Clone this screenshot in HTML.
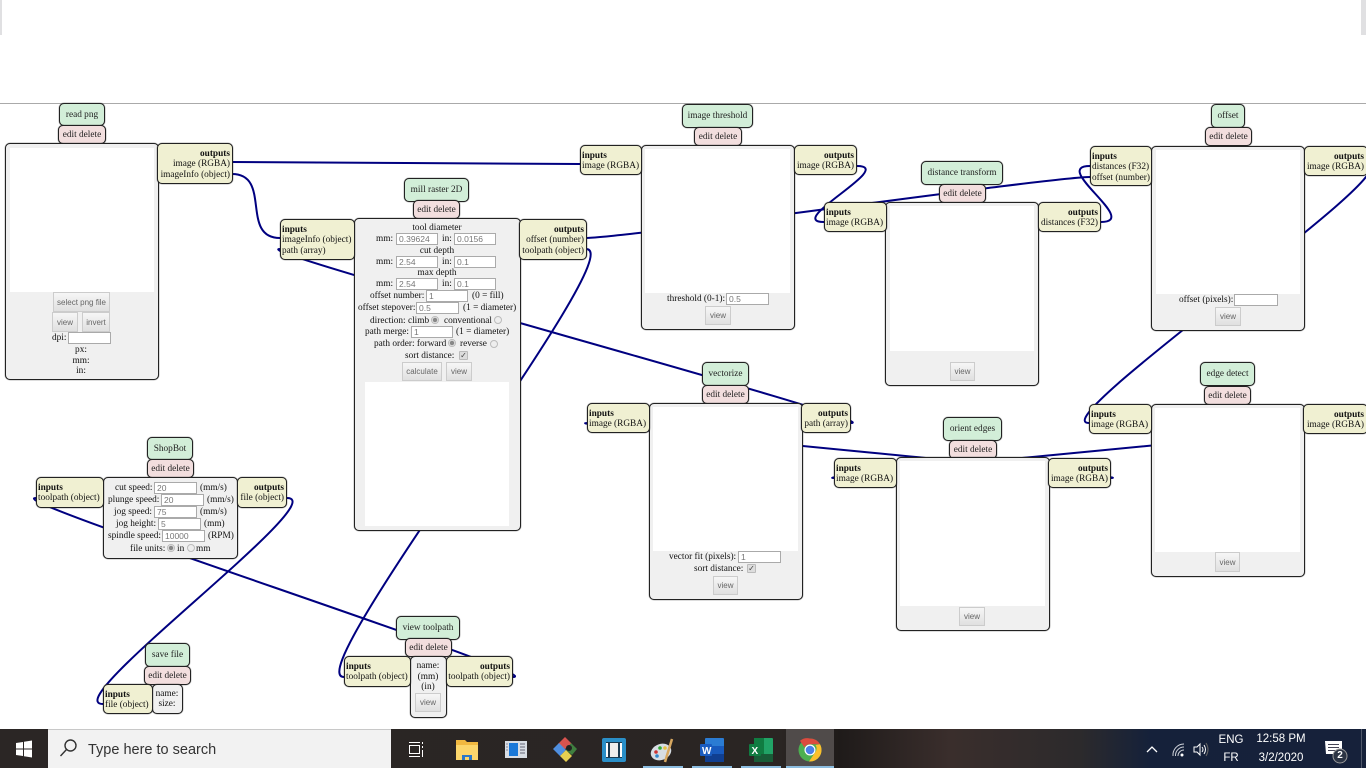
<!DOCTYPE html>
<html><head><meta charset="utf-8"><title>mods</title>
<style>
html,body{margin:0;padding:0;width:1366px;height:768px;overflow:hidden;background:#fff}
*{box-sizing:border-box}
body{position:relative;font-family:"Liberation Serif",serif;font-size:9.3px;color:#111}
.a,.g,.p,.y,.m,.w,.t,.c,i,button{position:absolute}
.g{background:#d2eed8;border:1px solid #222;box-shadow:0 0 1px #222;border-radius:5px;display:flex;align-items:center;justify-content:center;color:#222;white-space:nowrap}
.p{background:#f2dede;border:1px solid #222;box-shadow:0 0 1px #222;border-radius:5px;display:flex;align-items:center;justify-content:center;color:#222;white-space:nowrap}
.y{background:#f0f0d2;border:1px solid #222;box-shadow:0 0 1px #222;border-radius:5px;line-height:10.5px;padding:4.5px 2px 0 1px}
.y.r{text-align:right}
.y b{display:block}
.y span{display:block;white-space:nowrap}
.m{background:#f0f0f0;border:1px solid #222;box-shadow:0 0 1px #222;border-radius:5px}
.w{background:#fff}
.t,.c{white-space:nowrap;line-height:11px;margin-top:1px}
.c{transform:translateX(-50%)}
input{position:absolute;border:1px solid #aaa;background:#fff;font:8.5px "Liberation Sans",sans-serif;color:#777;padding:0 0 0 2px;height:12px;margin:0;outline:0}
button{border:1px solid #ccc;background:linear-gradient(#f6f6f6,#e0e0e0);font:8px "Liberation Sans",sans-serif;color:#666;padding:0;margin:0}
i.ra{width:8px;height:8px;border-radius:50%;border:1px solid #bbb;background:#eee}
i.on{background:radial-gradient(circle,#888 0 2px,#eee 2.5px)}
i.ck{width:9px;height:9px;border:1px solid #bbb;background:#ddd;border-radius:1px;font:normal 8px/8px "DejaVu Sans",sans-serif;color:#444;text-align:center}
#tb{position:absolute;left:0;top:729px;width:1366px;height:39px;background:linear-gradient(90deg,#2b2625 0,#2a2523 780px,#1f1b1a 840px,#3a2e2c 950px,#2c2a2c 1080px,#15213a 1150px,#16213a 1366px)}
.u{position:absolute;top:766px;height:2px;background:#8cbde0}
.tray{position:absolute;color:#fff;font:11.5px/14px "Liberation Sans",sans-serif;text-align:center;white-space:nowrap;transform:translateX(-50%)}
</style></head><body>

<div class="a" style="left:0;top:0;width:2px;height:35px;background:#e0e0e2"></div>
<div class="a" style="left:1361px;top:0;width:5px;height:35px;background:#e0e0e2"></div>
<div class="a" style="left:0;top:103px;width:1366px;height:1px;background:#aaa"></div>

<svg class="a" style="left:0;top:0" width="1366" height="768" fill="none" stroke="#000080" stroke-width="2">
<path d="M232,162 C272,162 540,164 580,164"/>
<path d="M232,174 C272,174 240,238 280,238"/>
<path d="M586,238 C626,238 1050,177 1090,177"/>
<path d="M586,249 C634,249 296,677 344,677"/>
<path d="M851,423 C891,423 240,249 280,249"/>
<path d="M857,166 C897,166 784,222 824,222"/>
<path d="M1101,222 C1141,222 1050,166 1090,166"/>
<path d="M1366,166 C1414,166 1041,423 1089,423"/>
<path d="M1111,478 C1151,478 547,423 587,423"/>
<path d="M1366,423 C1406,423 794,478 834,478"/>
<path d="M513,677 C553,677 -4,498 36,498"/>
<path d="M287,498 C335,498 55,704 103,704"/>
</svg>

<!-- read png -->
<div class="g" style="left:59px;top:103px;width:46px;height:23px">read png</div>
<div class="p" style="left:58px;top:125px;width:48px;height:19px">edit delete</div>
<div class="m" style="left:5px;top:143px;width:154px;height:237px"></div>
<div class="w" style="left:10px;top:148px;width:144px;height:144px"></div>
<button style="left:53px;top:292px;width:57px;height:20px">select png file</button>
<button style="left:52px;top:312px;width:26px;height:20px">view</button>
<button style="left:82px;top:312px;width:28px;height:20px">invert</button>
<span class="t" style="left:52px;top:332px">dpi:</span>
<input style="left:68px;top:332px;width:43px">
<span class="c" style="left:81px;top:344px">px:</span>
<span class="c" style="left:81px;top:355px">mm:</span>
<span class="c" style="left:81px;top:365px">in:</span>
<div class="y r" style="left:157px;top:143px;width:76px;height:41px"><b>outputs</b><span>image (RGBA)</span><span>imageInfo (object)</span></div>

<!-- mill raster 2D -->
<div class="g" style="left:404px;top:178px;width:65px;height:24px">mill raster 2D</div>
<div class="p" style="left:413px;top:200px;width:47px;height:19px">edit delete</div>
<div class="m" style="left:354px;top:218px;width:167px;height:313px"></div>
<div class="y" style="left:280px;top:219px;width:75px;height:41px"><b>inputs</b><span>imageInfo (object)</span><span>path (array)</span></div>
<div class="y r" style="left:519px;top:219px;width:68px;height:41px"><b>outputs</b><span>offset (number)</span><span>toolpath (object)</span></div>
<span class="c" style="left:437px;top:222px">tool diameter</span>
<span class="t" style="left:376px;top:233px">mm:</span><input style="left:396px;top:233px;width:42px" value="0.39624"><span class="t" style="left:442px;top:233px">in:</span><input style="left:454px;top:233px;width:42px" value="0.0156">
<span class="c" style="left:437px;top:245px">cut depth</span>
<span class="t" style="left:376px;top:256px">mm:</span><input style="left:396px;top:256px;width:42px" value="2.54"><span class="t" style="left:442px;top:256px">in:</span><input style="left:454px;top:256px;width:42px" value="0.1">
<span class="c" style="left:437px;top:267px">max depth</span>
<span class="t" style="left:376px;top:278px">mm:</span><input style="left:396px;top:278px;width:42px" value="2.54"><span class="t" style="left:442px;top:278px">in:</span><input style="left:454px;top:278px;width:42px" value="0.1">
<span class="t" style="left:370px;top:290px">offset number:</span><input style="left:426px;top:290px;width:42px" value="1"><span class="t" style="left:472px;top:290px">(0 = fill)</span>
<span class="t" style="left:358px;top:302px">offset stepover:</span><input style="left:416px;top:302px;width:43px" value="0.5"><span class="t" style="left:463px;top:302px">(1 = diameter)</span>
<span class="t" style="left:370px;top:315px">direction: climb</span><i class="ra on" style="left:431px;top:316px"></i><span class="t" style="left:444px;top:315px">conventional</span><i class="ra" style="left:494px;top:316px"></i>
<span class="t" style="left:365px;top:326px">path merge:</span><input style="left:411px;top:326px;width:42px" value="1"><span class="t" style="left:456px;top:326px">(1 = diameter)</span>
<span class="t" style="left:374px;top:338px">path order: forward</span><i class="ra on" style="left:448px;top:339px"></i><span class="t" style="left:460px;top:338px">reverse</span><i class="ra" style="left:490px;top:340px"></i>
<span class="t" style="left:405px;top:350px">sort distance:</span><i class="ck" style="left:459px;top:351px">✓</i>
<button style="left:402px;top:362px;width:40px;height:19px">calculate</button>
<button style="left:446px;top:362px;width:26px;height:19px">view</button>
<div class="w" style="left:365px;top:382px;width:144px;height:144px"></div>

<!-- image threshold -->
<div class="g" style="left:682px;top:104px;width:71px;height:24px">image threshold</div>
<div class="p" style="left:694px;top:127px;width:48px;height:19px">edit delete</div>
<div class="m" style="left:641px;top:145px;width:154px;height:185px"></div>
<div class="w" style="left:645px;top:149px;width:145px;height:144px"></div>
<div class="y" style="left:580px;top:145px;width:62px;height:30px"><b>inputs</b><span>image (RGBA)</span></div>
<div class="y r" style="left:794px;top:145px;width:63px;height:30px"><b>outputs</b><span>image (RGBA)</span></div>
<span class="t" style="left:667px;top:293px">threshold (0-1):</span><input style="left:726px;top:293px;width:43px" value="0.5">
<button style="left:705px;top:306px;width:26px;height:19px">view</button>

<!-- distance transform -->
<div class="g" style="left:921px;top:161px;width:82px;height:24px">distance transform</div>
<div class="p" style="left:939px;top:184px;width:47px;height:19px">edit delete</div>
<div class="m" style="left:885px;top:202px;width:154px;height:184px"></div>
<div class="w" style="left:890px;top:206px;width:144px;height:145px"></div>
<div class="y" style="left:824px;top:202px;width:63px;height:30px"><b>inputs</b><span>image (RGBA)</span></div>
<div class="y r" style="left:1038px;top:202px;width:63px;height:30px"><b>outputs</b><span>distances (F32)</span></div>
<button style="left:950px;top:362px;width:25px;height:19px">view</button>

<!-- offset -->
<div class="g" style="left:1211px;top:104px;width:34px;height:24px">offset</div>
<div class="p" style="left:1205px;top:127px;width:47px;height:19px">edit delete</div>
<div class="m" style="left:1151px;top:146px;width:154px;height:185px"></div>
<div class="w" style="left:1156px;top:150px;width:144px;height:144px"></div>
<div class="y" style="left:1090px;top:146px;width:62px;height:40px"><b>inputs</b><span>distances (F32)</span><span>offset (number)</span></div>
<div class="y r" style="left:1304px;top:146px;width:64px;height:30px;padding-right:3px"><b>outputs</b><span>image (RGBA)</span></div>
<span class="t" style="left:1179px;top:294px">offset (pixels):</span><input style="left:1234px;top:294px;width:44px">
<button style="left:1215px;top:307px;width:26px;height:19px">view</button>

<!-- vectorize -->
<div class="g" style="left:702px;top:362px;width:47px;height:24px">vectorize</div>
<div class="p" style="left:702px;top:385px;width:47px;height:19px">edit delete</div>
<div class="m" style="left:649px;top:403px;width:154px;height:197px"></div>
<div class="w" style="left:653px;top:407px;width:145px;height:144px"></div>
<div class="y" style="left:587px;top:403px;width:63px;height:30px"><b>inputs</b><span>image (RGBA)</span></div>
<div class="y r" style="left:801px;top:403px;width:50px;height:30px"><b>outputs</b><span>path (array)</span></div>
<span class="t" style="left:669px;top:551px">vector fit (pixels):</span><input style="left:738px;top:551px;width:43px" value="1">
<span class="t" style="left:694px;top:563px">sort distance:</span><i class="ck" style="left:747px;top:564px">✓</i>
<button style="left:713px;top:576px;width:25px;height:19px">view</button>

<!-- orient edges -->
<div class="g" style="left:943px;top:417px;width:59px;height:24px">orient edges</div>
<div class="p" style="left:949px;top:440px;width:48px;height:19px">edit delete</div>
<div class="m" style="left:896px;top:457px;width:154px;height:174px"></div>
<div class="w" style="left:900px;top:461px;width:145px;height:145px"></div>
<div class="y" style="left:834px;top:458px;width:63px;height:30px"><b>inputs</b><span>image (RGBA)</span></div>
<div class="y r" style="left:1048px;top:458px;width:63px;height:30px"><b>outputs</b><span>image (RGBA)</span></div>
<button style="left:959px;top:607px;width:26px;height:19px">view</button>

<!-- edge detect -->
<div class="g" style="left:1200px;top:362px;width:55px;height:24px">edge detect</div>
<div class="p" style="left:1204px;top:386px;width:47px;height:19px">edit delete</div>
<div class="m" style="left:1151px;top:404px;width:154px;height:173px"></div>
<div class="w" style="left:1155px;top:408px;width:145px;height:144px"></div>
<div class="y" style="left:1089px;top:404px;width:63px;height:30px"><b>inputs</b><span>image (RGBA)</span></div>
<div class="y r" style="left:1303px;top:404px;width:65px;height:30px;padding-right:3px"><b>outputs</b><span>image (RGBA)</span></div>
<button style="left:1215px;top:552px;width:25px;height:20px">view</button>

<!-- ShopBot -->
<div class="g" style="left:147px;top:437px;width:46px;height:23px">ShopBot</div>
<div class="p" style="left:147px;top:459px;width:47px;height:19px">edit delete</div>
<div class="m" style="left:103px;top:477px;width:135px;height:82px"></div>
<div class="y" style="left:36px;top:477px;width:68px;height:31px"><b>inputs</b><span>toolpath (object)</span></div>
<div class="y r" style="left:237px;top:477px;width:50px;height:31px"><b>outputs</b><span>file (object)</span></div>
<span class="t" style="left:115px;top:482px">cut speed:</span><input style="left:154px;top:482px;width:43px" value="20"><span class="t" style="left:200px;top:482px">(mm/s)</span>
<span class="t" style="left:108px;top:494px">plunge speed:</span><input style="left:161px;top:494px;width:43px" value="20"><span class="t" style="left:207px;top:494px">(mm/s)</span>
<span class="t" style="left:114px;top:506px">jog speed:</span><input style="left:154px;top:506px;width:43px" value="75"><span class="t" style="left:200px;top:506px">(mm/s)</span>
<span class="t" style="left:116px;top:518px">jog height:</span><input style="left:158px;top:518px;width:43px" value="5"><span class="t" style="left:204px;top:518px">(mm)</span>
<span class="t" style="left:108px;top:530px">spindle speed:</span><input style="left:162px;top:530px;width:43px" value="10000"><span class="t" style="left:208px;top:530px">(RPM)</span>
<span class="t" style="left:130px;top:543px">file units:</span><i class="ra on" style="left:167px;top:544px"></i><span class="t" style="left:177px;top:543px">in</span><i class="ra" style="left:187px;top:544px"></i><span class="t" style="left:196px;top:543px">mm</span>

<!-- save file -->
<div class="g" style="left:145px;top:643px;width:45px;height:24px">save file</div>
<div class="p" style="left:144px;top:666px;width:47px;height:19px">edit delete</div>
<div class="m" style="left:152px;top:684px;width:31px;height:30px"></div>
<div class="y" style="left:103px;top:684px;width:50px;height:30px"><b>inputs</b><span>file (object)</span></div>
<span class="c" style="left:167px;top:688px">name:</span>
<span class="c" style="left:167px;top:698px">size:</span>

<!-- view toolpath -->
<div class="g" style="left:396px;top:616px;width:64px;height:24px">view toolpath</div>
<div class="p" style="left:405px;top:638px;width:47px;height:19px">edit delete</div>
<div class="m" style="left:410px;top:656px;width:37px;height:62px"></div>
<div class="y" style="left:344px;top:656px;width:67px;height:31px"><b>inputs</b><span>toolpath (object)</span></div>
<div class="y r" style="left:446px;top:656px;width:67px;height:31px"><b>outputs</b><span>toolpath (object)</span></div>
<span class="c" style="left:428px;top:660px">name:</span>
<span class="c" style="left:428px;top:671px">(mm)</span>
<span class="c" style="left:428px;top:681px">(in)</span>
<button style="left:415px;top:693px;width:26px;height:19px">view</button>

<!-- taskbar -->
<div id="tb"></div>
<div class="a" style="left:48px;top:729px;width:343px;height:39px;background:#f2f2f2;border-top:1px solid #c8c8c8"></div>
<div class="a" style="left:786px;top:729px;width:48px;height:39px;background:#504b4a"></div>
<div class="u" style="left:643px;width:40px"></div>
<div class="u" style="left:692px;width:40px"></div>
<div class="u" style="left:741px;width:40px"></div>
<div class="u" style="left:786px;width:48px"></div>

<svg class="a" style="left:0;top:729px" width="1366" height="39">
<!-- windows -->
<g fill="#fff"><path d="M16,14 L23,13 V19.5 H16Z"/><path d="M24,12.8 L32,11.5 V19.5 H24Z"/><path d="M16,20.5 H23 V27 L16,26Z"/><path d="M24,20.5 H32 V28.5 L24,27.2Z"/></g>
<!-- search -->
<g fill="none" stroke="#333" stroke-width="1.4"><circle cx="70.5" cy="16.5" r="5.5"/><path d="M66.5,20.5 L60.5,27"/></g>
<!-- task view -->
<g fill="none" stroke="#fff" stroke-width="1"><rect x="409.5" y="16.5" width="10" height="8"/><path d="M409,13.5H420M409,27.5H420M422.5,13v2M422.5,17v2M422.5,21v7"/></g>
<!-- folder -->
<path d="M456,11 H465 L467,13 H478 V31 H456Z" fill="#f0b840"/>
<path d="M456,16 H478 V31 H456Z" fill="#fbd66b"/>
<path d="M462,31 V26 H472 V31 H469 V28 H465 V31Z" fill="#2a78c8"/>
<!-- news/window app -->
<rect x="505" y="12" width="22" height="17" fill="#d8dde4"/><rect x="509" y="14" width="9" height="13" fill="#1a78d8"/><path d="M520,15h5M520,18h5M520,21h5M520,24h5" stroke="#667" stroke-width="1"/><path d="M506,15h2M506,18h2M506,21h2" stroke="#889" stroke-width="1"/>
<!-- diamond -->
<path d="M565,8 L572,15 L565,20 L558,15Z" fill="#d9534f"/>
<path d="M553,20 L559,14 L566,21 L560,27Z" fill="#4f8fe0"/>
<path d="M566,21 L571,14 L577,20 L572,26Z" fill="#3f7f3f"/>
<path d="M560,27 L566,21 L572,27 L566,33Z" fill="#e8d050"/>
<circle cx="569" cy="19" r="3" fill="#222"/>
<!-- blue square -->
<rect x="602" y="9" width="24" height="24" rx="2" fill="#2a8fc8"/><rect x="606" y="13" width="16" height="16" fill="#1a3a50"/><rect x="610" y="14" width="8" height="14" fill="#eee"/><path d="M607,14v14M621,14v14" stroke="#fff" stroke-width="2"/>
<!-- palette -->
<ellipse cx="661" cy="23" rx="10.5" ry="8" fill="#d7dde3" transform="rotate(-20 661 23)"/><circle cx="656" cy="23" r="1.8" fill="#c33"/><circle cx="660" cy="19" r="1.8" fill="#3a3"/><circle cx="665" cy="19" r="1.8" fill="#e8c040"/><circle cx="657" cy="27" r="1.8" fill="#38c"/>
<path d="M672,10 L665,33" stroke="#d8a860" stroke-width="2.5"/>
<!-- word -->
<rect x="705" y="9" width="19" height="24" rx="1" fill="#2b7cd3"/><rect x="705" y="17" width="19" height="8" fill="#185abd"/><rect x="705" y="25" width="19" height="8" fill="#103f91"/><rect x="700" y="15" width="12" height="12" rx="1" fill="#1a5cc0"/>
<text x="702" y="25" font-family="Liberation Sans" font-weight="bold" font-size="10" fill="#fff">W</text>
<!-- excel -->
<rect x="754" y="9" width="19" height="24" rx="1" fill="#21a366"/><rect x="754" y="9" width="10" height="8" fill="#107c41"/><rect x="754" y="17" width="10" height="8" fill="#107c41"/><rect x="754" y="25" width="19" height="8" fill="#185c37"/><rect x="749" y="15" width="12" height="12" rx="1" fill="#107c41"/>
<text x="751.5" y="25" font-family="Liberation Sans" font-weight="bold" font-size="10" fill="#fff">X</text>
<!-- chrome -->
<circle cx="810" cy="21" r="11.5" fill="#4caf50"/>
<path d="M810,9.5 A11.5,11.5 0 0 1 820,15.3 L810,15.3 A6,6 0 0 0 804.5,18.5 L800,11.8 A11.5,11.5 0 0 1 810,9.5Z" fill="#dd4b3e"/>
<path d="M820,15.3 A11.5,11.5 0 0 1 809,32.5 L815,23.5 A6,6 0 0 0 815.5,16 Z" fill="#fbc02d"/>
<circle cx="810" cy="21" r="5.5" fill="#fff"/><circle cx="810" cy="21" r="4.3" fill="#4a80e8"/>
<!-- tray -->
<path d="M1147,23 L1152,18 L1157,23" fill="none" stroke="#fff" stroke-width="1.3"/>
<g fill="none" stroke="#cfd3da" stroke-width="1"><path d="M1173,27 A11,11 0 0 1 1184,15"/><path d="M1175.5,27 A8.5,8.5 0 0 1 1184,18"/><path d="M1178,27 A6,6 0 0 1 1184,21"/></g><circle cx="1182" cy="26" r="1.5" fill="#fff"/>
<path d="M1194,18 H1197 L1200,15 V26 L1197,23 H1194Z" fill="none" stroke="#fff" stroke-width="1"/>
<path d="M1202,18 Q1204,20.5 1202,23 M1204,16 Q1207,20.5 1204,25" fill="none" stroke="#fff" stroke-width="1"/>
<path d="M1206,14 Q1210,20.5 1206,27" fill="none" stroke="#666" stroke-width="1"/>
<path d="M1325,12 H1342 V25 H1330 L1326,25 Z" fill="#fff"/><path d="M1328,15.5h11M1328,18.5h11M1328,21.5h8" stroke="#445" stroke-width="1"/>
<circle cx="1340" cy="27" r="7" fill="#2c3444" stroke="#9a9a9a" stroke-width="1"/>
<path d="M1361.5,0V39" stroke="#50586a" stroke-width="1"/>
</svg>
<div class="a" style="left:88px;top:741px;font:14.5px/18px 'Liberation Sans',sans-serif;color:#333;white-space:nowrap">Type here to search</div>
<div class="tray" style="left:1231px;top:733px">ENG</div>
<div class="tray" style="left:1231px;top:751px">FR</div>
<div class="tray" style="left:1281px;top:732px">12:58 PM</div>
<div class="tray" style="left:1281px;top:751px">3/2/2020</div>
<div class="tray" style="left:1340px;top:749px;font-size:10px;font-weight:bold">2</div>
</body></html>
